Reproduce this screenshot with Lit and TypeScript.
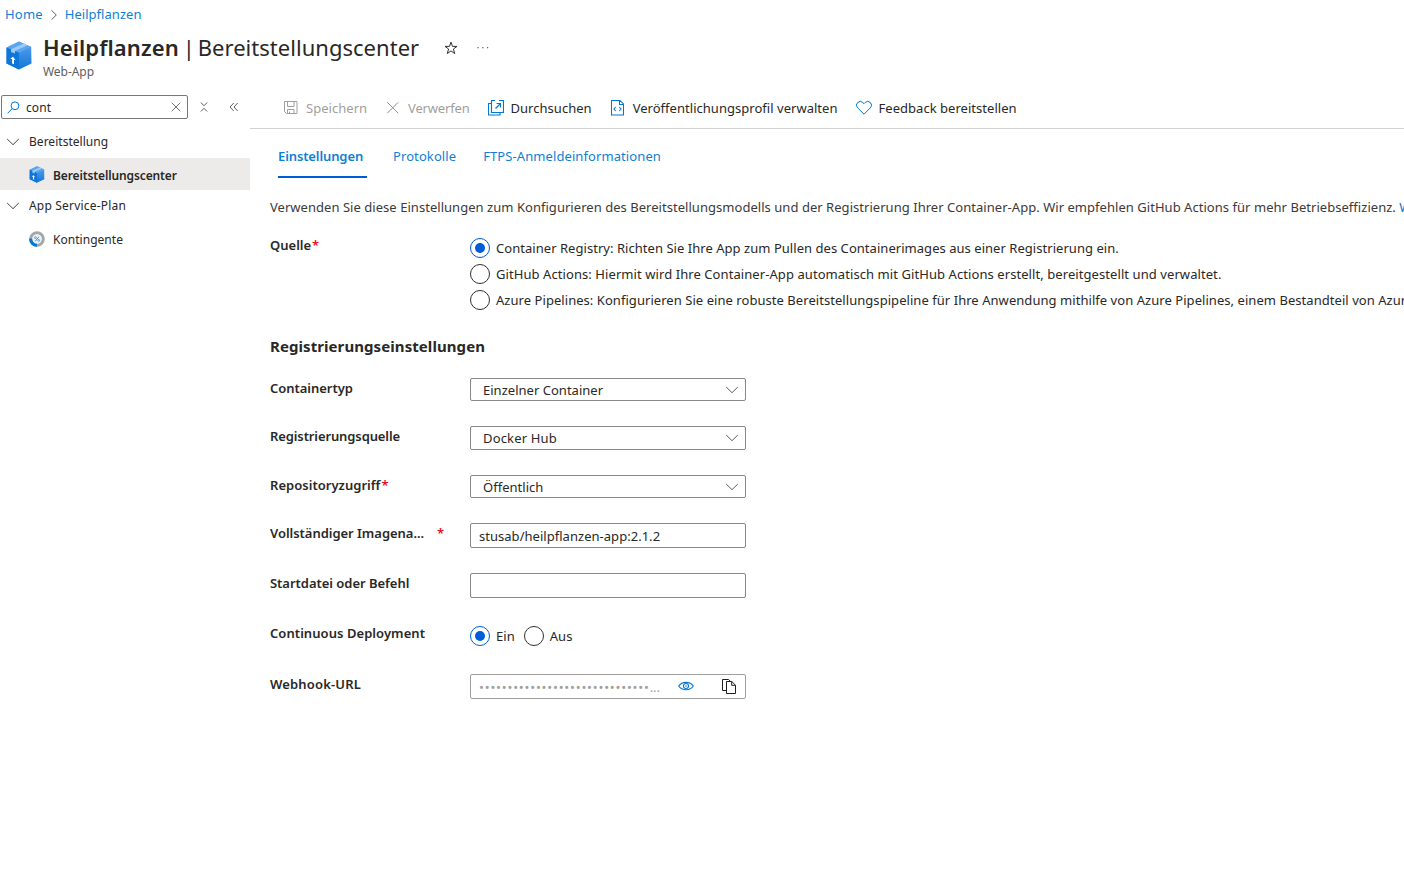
import { LitElement, html, svg, css, nothing } from "lit";
import { customElement, property, state } from "lit/decorators.js";
import { classMap } from "lit/directives/class-map.js";

const cube = (size: number, h: number) => html`<svg width=${size} height=${h} viewBox="0 0 26 29">
  <defs>
    <linearGradient id="right" x1="0" y1="0" x2="0" y2="1">
      <stop offset="0" stop-color="#5ea0ef" /><stop offset="1" stop-color="#1078d6" />
    </linearGradient>
  </defs>
  <path d="M13 .5 25.2 6 25.5 22.6 13 28.5.5 22.6V6.4z" fill="url(#right)" />
  <path d="M13 .5 25.2 6 13 11.8.6 6.4z" fill="#5aa5f0" />
  <path d="M.5 6.4 13 11.8V28.5L.5 22.6z" fill="#0f75d8" />
  <path d="M5 8.2 17.8 2.6 21.4 4.2 9 9.9V12.6L5 10.9z" fill="#9ccbfa" />
  <path d="M7 15.8 9.700 19.300 8 18.800V23.300L6.100 22.500V18.200L4.300 17.500z" fill="#fff" />
</svg>`;

const gauge = html`<svg width="16" height="16" viewBox="0 0 16 16">
  <circle cx="8" cy="8" r="6.3" fill="#fff" stroke="#a6a6a6" stroke-width="3" />
  <path d="M1.7 7.6A6.3 6.3 0 0 0 8 14.3" fill="none" stroke="#0078d4" stroke-width="3.1" />
  <circle cx="8" cy="8" r="4.2" fill="#e6f3fc" />
  <path d="M6.3 10.2 9.8 5.8" stroke="#2f8fe0" stroke-width="1" />
  <circle cx="6.4" cy="6.6" r=".9" fill="none" stroke="#2f8fe0" stroke-width=".8" />
  <circle cx="9.7" cy="9.4" r=".9" fill="none" stroke="#2f8fe0" stroke-width=".8" />
</svg>`;

const line = (size: number, d: string, color: string, width = 1) => html`<svg
  width=${size} height=${size} viewBox="0 0 16 16" fill="none"
  stroke=${color} stroke-width=${width}>${svg`<path d=${d} />`}</svg>`;

const chevronDown = (color: string) => html`<svg width="14" height="8" viewBox="0 0 14 8" fill="none"
  stroke=${color} stroke-width="1"><path d="M1.2 1 7 6.7 12.8 1" /></svg>`;

const icons = {
  save: line(16, "M1.500 1.500h12.500v12H3.500L1.500 11.700zM4.500 1.500v5h6.500v-5M4.500 13.500v-4h6.500v4M6.500 13.500v-2", "#a19f9d"),
  discard: line(16, "M2.300 2.300 13.200 13.200M13.200 2.300 2.300 13.200", "#8f8d8b"),
  browse: line(16, "M3.500 3.500H.5v11.500h11.500v-2.500M7 .5H3.500v12h12V.5H11M7.500 8.500 12.500 3.500M8.500 3.500h4v4", "#0078d4", 1.15),
  profile: line(16, "M1.500 .5h8.500L13.500 4v11H1.500zM9.500.8v3.700H13.500M5.800 7 3.900 9 5.800 11M9.200 7l1.900 2-1.900 2", "#0078d4", 1.05),
  heart: line(16, "M8 14.200 1.600 7.800A3.700 3.700 0 0 1 6.900 2.600L8 3.700 9.100 2.600a3.700 3.700 0 0 1 5.300 5.200z", "#0078d4"),
};

@customElement("az-radio")
export class AzRadio extends LitElement {
  @property({ type: Boolean }) checked = false;
  static styles = css`
    :host { display: flex; align-items: center; gap: 6px; height: 20px; white-space: nowrap; letter-spacing: var(--ls, 0.04px); }
    .ring { box-sizing: border-box; width: 20px; height: 20px; flex: none; border: 1px solid #323130; border-radius: 50%; display: grid; place-items: center; }
    .ring.on { border-color: #015cda; }
    .ring.on::after { content: ""; width: 10px; height: 10px; border-radius: 50%; background: #015cda; }
  `;
  render() {
    return html`<span class=${classMap({ ring: true, on: this.checked })}></span><span><slot></slot></span>`;
  }
}

@customElement("az-select")
export class AzSelect extends LitElement {
  @property() value = "";
  static styles = css`
    :host { box-sizing: border-box; display: flex; align-items: center; justify-content: space-between; width: 276px; height: 23px; border: 1px solid #8a8886; border-radius: 2px; padding: 0 6px 0 12px; letter-spacing: 0.02px; line-height: 20px; }
    :host(.tall) { height: 24px; letter-spacing: 0.17px; }
    svg { display: block; }
  `;
  render() {
    return html`<span>${this.value}</span>${chevronDown("#605e5c")}`;
  }
}

@customElement("app-root")
export class AppRoot extends LitElement {
  @state() private continuous = true;

  static styles = css`
    :host { display: block; width: 100%; height: 878px; overflow: hidden; background: #fff; color: #292827; font: 13px/20px "Noto Sans", "Open Sans", sans-serif; letter-spacing: 0.03px; }
    * { box-sizing: border-box; }
    svg { display: block; flex: none; }
    .crumbs { display: flex; align-items: center; height: 20px; margin: 4px 0 0 5px; color: #0f7fd6; }
    .crumbs svg { margin: 1px 6px 0 6px; }
    .home { letter-spacing: 0.2px; }
    .head { display: flex; padding: 7px 0 0 6px; height: 71px; }
    .head .logo { padding-top: 10px; width: 37px; }
    .title { font-size: 22px; line-height: 32px; white-space: nowrap; display: flex; margin: 0; font-weight: 400; letter-spacing: 0.03px; word-spacing: -3px; }
    .title b { font-weight: 600; letter-spacing: 0.1px; margin-right: 4px; }
    .title .star { margin: 10px 0 0 25px; }
    .title .dots { margin: 15px 0 0 18px; }
    .kind { font-size: 12px; line-height: 16px; padding-top: 1px; color: #605e5c; letter-spacing: -0.05px; }
    .body { display: grid; grid-template-columns: 250px 1fr; }
    nav { font-size: 12px; }
    .find { display: flex; align-items: center; height: 24px; margin-bottom: 7px; padding-left: 1px; }
    .box { width: 187px; height: 24px; border: 1px solid #7a7876; border-radius: 2px; display: flex; align-items: center; padding: 0 6px 0 5px; margin-right: 10px; }
    .box span { flex: 1; padding: 1px 0 0 6px; letter-spacing: 0.1px; }
    .find .up { margin-right: 18px; }
    .group, .leaf { display: flex; align-items: center; height: 32px; }
    .group { padding-left: 6px; gap: 9px; }
    .leaf { padding: 3px 0 0 29px; gap: 8px; }
    .leaf.on { background: #edebe9; font-weight: 600; letter-spacing: -0.12px; }
    .leaf svg { margin-top: -2px; }
    .plan { letter-spacing: 0.19px; }
    main { min-width: 0; }
    .bar { display: flex; align-items: center; gap: 18px; height: 34px; padding: 0 0 8px 33px; border-bottom: 1px solid #d2d0ce; white-space: nowrap; }
    .cmd { display: flex; align-items: center; gap: 7px; }
    .cmd.off { color: #a19f9d; }
    .cmd.tight { letter-spacing: -0.18px; }
    .tabs { display: flex; margin: 17px 0 0 28px; color: #0f7fd6; }
    .tab { height: 32px; white-space: nowrap; letter-spacing: 0.09px; }
    .tab.on { width: 89px; margin-right: 26px; font-weight: 600; letter-spacing: -0.11px; border-bottom: 2px solid #015cda; }
    .tab.mid { margin-right: 27px; }
    .form { padding-left: 20px; margin-top: 19px; overflow: hidden; }
    .note { white-space: nowrap; letter-spacing: 0.038px; color: #3b3a39; }
    .note a { color: #0078d4; }
    .row { display: grid; grid-template-columns: 200px 1fr; align-items: start; }
    .label { font-weight: 600; white-space: nowrap; letter-spacing: var(--ls, -0.03px); }
    .req { color: #e81123; margin-left: 1px; letter-spacing: 0; }
    .req.far { margin-left: 13px; }
    .source { margin-top: 18px; }
    .radios { display: grid; gap: 6px; padding-top: 3px; }
    .source .label { --ls: 0; }
    .gh { --ls: 0.076px; }
    .az { --ls: 0.05px; }
    h2 { font-size: 15px; line-height: 20px; font-weight: 700; margin: 26px 0 22px; letter-spacing: 0.075px; }
    .r1 { height: 48px; } .r2 { height: 49px; } .r3 { height: 48px; } .r4, .r5 { height: 50px; } .r6 { height: 51px; }
    .r2 .label { --ls: -0.11px; }
    .r3 .label { --ls: 0.03px; }
    .r6 .label { --ls: 0.06px; }
    .r7 .label { --ls: 0.165px; }
    .text { width: 276px; height: 25px; border: 1px solid #8a8886; border-radius: 2px; padding: 2px 8px 0; }
    .pair { display: flex; gap: 9px; padding-top: 3px; }
    .secret { width: 276px; height: 25px; border: 1px solid #a19f9d; border-radius: 2px; display: flex; align-items: center; padding-left: 8px; color: #a19f9d; }
    .mask { width: 199px; letter-spacing: 0.8px; white-space: nowrap; }
    .mask i { font-style: normal; letter-spacing: 0; }
    .secret svg { margin-bottom: 2px; }
    .secret .copy { margin-left: 28px; }
  `;

  private cmd(icon: unknown, text: string, extra = "") {
    return html`<div class="cmd ${extra}">${icon}<span>${text}</span></div>`;
  }

  private row(cls: string, label: string, control: unknown, req?: string) {
    return html`<div class="row ${cls}">
      <div class="label">${label}${req !== undefined ? html`<span class="req ${req}">*</span>` : nothing}</div>
      ${control}
    </div>`;
  }

  render() {
    return html`
      <div class="crumbs">
        <span class="home">Home</span>
        <svg width="10" height="12" viewBox="0 0 10 12" fill="none" stroke="#605e5c"><path d="M2.5 1.3 7.3 6 2.5 10.7" /></svg>
        <span>Heilpflanzen</span>
      </div>
      <header class="head">
        <div class="logo">${cube(26, 29)}</div>
        <div>
          <h1 class="title">
            <b>Heilpflanzen</b><span>| Bereitstellungscenter</span>
            <svg class="star" width="14" height="14" viewBox="0 0 14 14" fill="none" stroke="#323130" stroke-width="1"><path d="M7 1.2 8.5 5.400H13L9.400 8 10.700 12.500 7 9.900 3.300 12.500 4.600 8 1 5.400H5.500z" /></svg>
            <svg class="dots" width="14" height="4" viewBox="0 0 14 4" fill="#605e5c"><path d="M1.500 1h1.200v1.200H1.500zM6.300 1h1.200v1.200H6.300zM11 1h1.200v1.200H11z" /></svg>
          </h1>
          <div class="kind">Web-App</div>
        </div>
      </header>
      <div class="body">
        <nav>
          <div class="find">
            <div class="box">
              <svg width="13" height="13" viewBox="0 0 13 13" fill="none" stroke="#0078d4"><circle cx="8" cy="4.800" r="3.900" /><path d="M5.200 7.600.7 12.200" /></svg>
              <span>cont</span>
              <svg width="10" height="10" viewBox="0 0 10 10" stroke="#605e5c" stroke-width=".9"><path d="M.8.8 9.200 9.200M9.200.8.8 9.200" /></svg>
            </div>
            <svg class="up" width="12" height="12" viewBox="0 0 12 12" fill="none" stroke="#605e5c"><path d="M2.800 1.500 6 4.700 9.200 1.500M2.800 10.500 6 7.300 9.200 10.500" /></svg>
            <svg width="12" height="12" viewBox="0 0 12 12" fill="none" stroke="#605e5c"><path d="M5.700 2 2 6 5.700 10M9.700 2 6 6 9.700 10" /></svg>
          </div>
          <div class="group">${chevronDown("#484644")}<span>Bereitstellung</span></div>
          <div class="leaf on">${cube(16, 17)}<span>Bereitstellungscenter</span></div>
          <div class="group">${chevronDown("#484644")}<span class="plan">App Service-Plan</span></div>
          <div class="leaf">${gauge}<span>Kontingente</span></div>
        </nav>
        <main>
          <div class="bar">
            ${this.cmd(icons.save, "Speichern", "off")}
            ${this.cmd(icons.discard, "Verwerfen", "off tight")}
            ${this.cmd(icons.browse, "Durchsuchen")}
            ${this.cmd(icons.profile, "Veröffentlichungsprofil verwalten")}
            ${this.cmd(icons.heart, "Feedback bereitstellen")}
          </div>
          <div class="tabs">
            <div class="tab on">Einstellungen</div>
            <div class="tab mid">Protokolle</div>
            <div class="tab">FTPS-Anmeldeinformationen</div>
          </div>
          <div class="form">
            <div class="note">Verwenden Sie diese Einstellungen zum Konfigurieren des Bereitstellungsmodells und der Registrierung Ihrer Container-App. Wir empfehlen GitHub Actions für mehr Betriebseffizienz. <a>Weitere Informationen</a></div>
            ${this.row("source", "Quelle", html`<div class="radios">
              <az-radio checked>Container Registry: Richten Sie Ihre App zum Pullen des Containerimages aus einer Registrierung ein.</az-radio>
              <az-radio class="gh">GitHub Actions: Hiermit wird Ihre Container-App automatisch mit GitHub Actions erstellt, bereitgestellt und verwaltet.</az-radio>
              <az-radio class="az">Azure Pipelines: Konfigurieren Sie eine robuste Bereitstellungspipeline für Ihre Anwendung mithilfe von Azure Pipelines, einem Bestandteil von Azure DevOps.</az-radio>
            </div>`, "")}
            <h2>Registrierungseinstellungen</h2>
            ${this.row("r1", "Containertyp", html`<az-select value="Einzelner Container"></az-select>`)}
            ${this.row("r2", "Registrierungsquelle", html`<az-select class="tall" value="Docker Hub"></az-select>`)}
            ${this.row("r3", "Repositoryzugriff", html`<az-select value="Öffentlich"></az-select>`, "")}
            ${this.row("r4", "Vollständiger Imagena...", html`<div class="text">stusab/heilpflanzen-app:2.1.2</div>`, "far")}
            ${this.row("r5", "Startdatei oder Befehl", html`<div class="text"></div>`)}
            ${this.row("r6", "Continuous Deployment", html`<div class="pair">
              <az-radio ?checked=${this.continuous} @click=${() => (this.continuous = true)}>Ein</az-radio>
              <az-radio ?checked=${!this.continuous} @click=${() => (this.continuous = false)}>Aus</az-radio>
            </div>`)}
            ${this.row("r7", "Webhook-URL", html`<div class="secret">
              <span class="mask">${"•".repeat(30)}<i>...</i></span>
              <svg width="16" height="10" viewBox="0 0 16 10" fill="none" stroke="#0078d4" stroke-width="1.100"><path d="M.7 5C4 .1 12 .1 15.300 5 12 9.900 4 9.900.7 5z" /><circle cx="8" cy="5" r="2.500" /><circle cx="8" cy="5" r=".8" fill="#0078d4" stroke="none" /></svg>
              <svg class="copy" width="15" height="16" viewBox="0 0 15 16" fill="none" stroke="#201f1e"><path d="M4.500 12.500H.5V1.500H6.500L8.300 3.200M4.500 3.500H9.800L13.500 7.200V15.500H4.500zM9.700 3.700V7.300H13.500" /></svg>
            </div>`)}
          </div>
        </main>
      </div>
    `;
  }
}
